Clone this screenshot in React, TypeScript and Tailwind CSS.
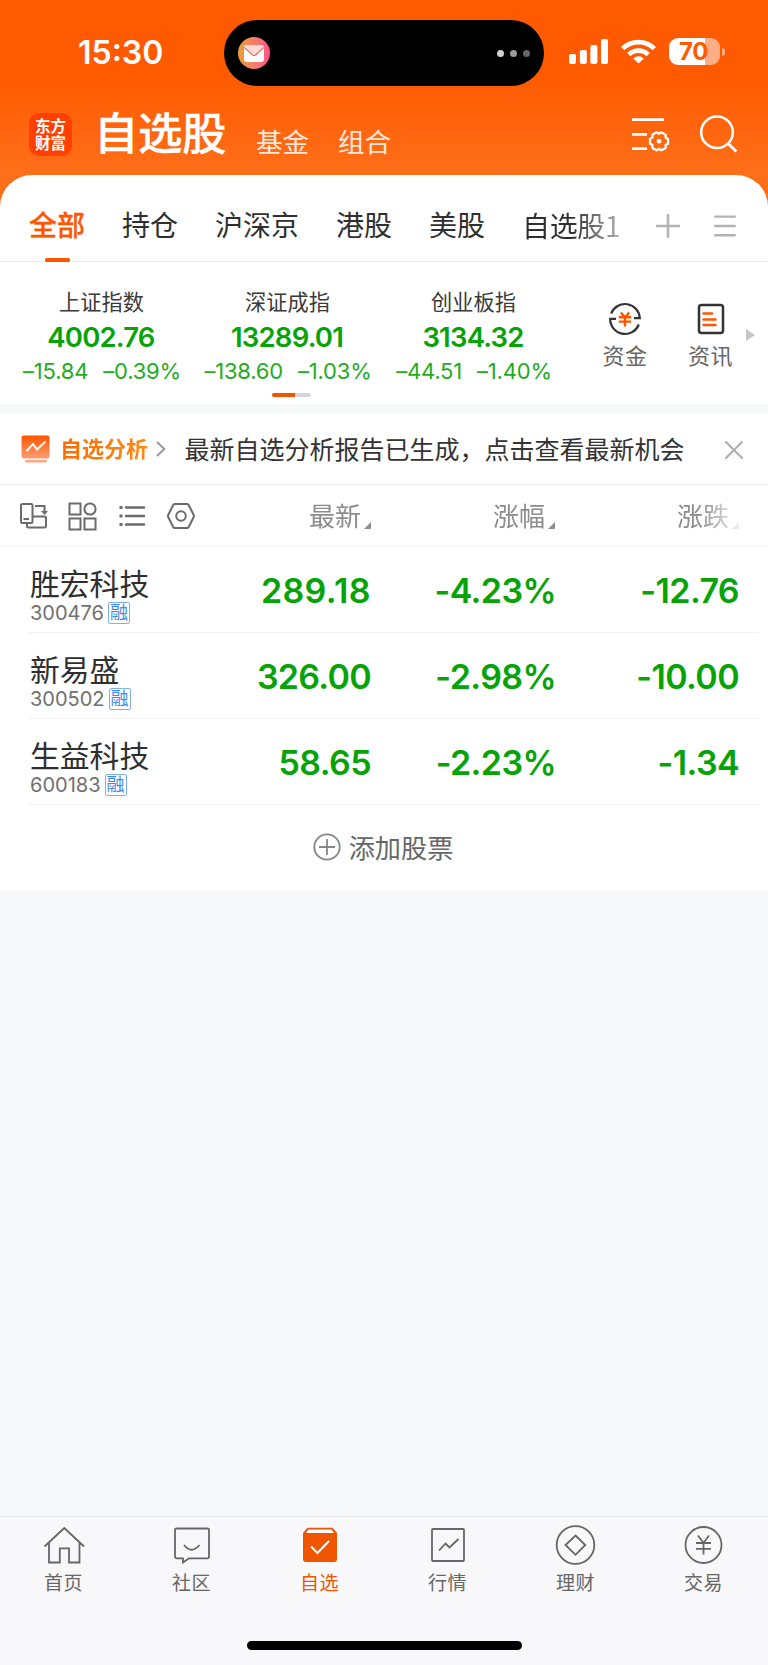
import type { ReactNode } from 'react';

const indices = [
  { name: '上证指数', value: '4002.76', change: '–15.84', percent: '–0.39%' },
  { name: '深证成指', value: '13289.01', change: '–138.60', percent: '–1.03%' },
  { name: '创业板指', value: '3134.32', change: '–44.51', percent: '–1.40%' },
];

const stocks = [
  { name: '胜宏科技', code: '300476', price: '289.18', percent: '-4.23%', change: '-12.76', priceSpacing: 'tracking-[0.4px]' },
  { name: '新易盛', code: '300502', price: '326.00', percent: '-2.98%', change: '-10.00', priceSpacing: 'tracking-[-0.7px]' },
  { name: '生益科技', code: '600183', price: '58.65', percent: '-2.23%', change: '-1.34', priceSpacing: 'tracking-[-0.6px]' },
];

const groups = ['持仓', '沪深京', '港股', '美股'];

const StatusBar = () => (
  <div className="flex h-[106px] items-center">
    <div className="w-[224px] pl-[78px] text-[32px] leading-none font-semibold">15:30</div>
    <div className="flex h-[66px] w-[320px] items-center justify-between rounded-full bg-black pr-[14px] pl-[14px]">
      <div className="flex size-8 items-center justify-center rounded-full bg-gradient-to-r from-[#e8a02c] to-[#ff4f8b]">
        <svg width="20" height="17" viewBox="0 0 20 17">
          <rect width="20" height="17" rx="3" fill="#fff" />
          <path d="M0 2.5Q0 0 3 0H17Q20 0 20 2.5L11.5 10Q10 11.2 8.5 10Z" fill="#ffd9d3" />
          <path d="M0.3 2.5L8.5 10Q10 11.2 11.5 10L19.7 2.5" fill="none" stroke="#f0705c" strokeWidth="1.1" />
        </svg>
      </div>
      <div className="flex gap-[6px]">
        <span className="size-[7px] rounded-full bg-[#d2d2d2]" />
        <span className="size-[7px] rounded-full bg-[#9b9b9b]" />
        <span className="size-[7px] rounded-full bg-[#666]" />
      </div>
    </div>
    <div className="flex items-center pb-[3px] pl-[25px]">
      <svg width="39" height="25" viewBox="0 0 39 25" fill="#fff">
        <rect x="0" y="15" width="7" height="10" rx="2" />
        <rect x="10.8" y="11" width="7" height="14" rx="2" />
        <rect x="21.4" y="6" width="7" height="19" rx="2" />
        <rect x="32" y="0" width="7" height="25" rx="2" />
      </svg>
      <svg className="ml-[13px]" width="35" height="25" viewBox="0 0 35 25" fill="none" stroke="#fff" strokeWidth="4.6">
        <path d="M1.7 9.6A22.4 22.4 0 0 1 33.3 9.6" />
        <path d="M7.8 15.6A13.8 13.8 0 0 1 27.2 15.6" />
        <path d="M17.5 24.6L12.2 19.5A7.6 7.6 0 0 1 22.8 19.5Z" fill="#fff" stroke="none" />
      </svg>
      <div className="ml-[13px] flex h-[27px] w-[51px] items-center justify-center rounded-[9px] bg-[linear-gradient(90deg,#fff_36px,#ffad85_36px)] pr-[2px] text-[24px] leading-none font-bold tracking-[-0.4px] text-[#ff5a00]">
        70
      </div>
      <div className="ml-[1.5px] h-2 w-[3px] rounded-r-full bg-[#ffad85]" />
    </div>
  </div>
);

const TitleBar = () => (
  <div className="flex h-[69px] items-start pl-[29px]">
    <div className="mt-[7px] flex size-[43px] flex-col items-center justify-center rounded-[10px] bg-[#ff4000] text-[15.5px] leading-[17px] font-bold">
      <span>东方</span>
      <span>财富</span>
    </div>
    <h1 className="ml-[22px] text-[44.5px] leading-[57px] font-medium tracking-[-0.5px] [-webkit-text-stroke:0.3px_#fff]">自选股</h1>
    <span className="mt-[18px] ml-[30px] text-[26.5px] leading-[36px] text-white/85">基金</span>
    <span className="mt-[18px] ml-[29px] text-[26.5px] leading-[36px] text-white/85">组合</span>
    <svg className="mt-[10px] ml-auto" width="38" height="36" viewBox="0 0 38 36" fill="none" stroke="#fff" strokeWidth="2.7">
      <path d="M0 3.7H32M0 18.4H15M0 32.6H15" />
      <path
        d="M36 22.9V27.7L33.6 29.1V31.9L29.4 34.3L27 32.9L24.6 34.3L20.4 31.9V29.1L18 27.7V22.9L20.4 21.5V18.7L24.6 16.3L27 17.7L29.4 16.3L33.6 18.7V21.5Z"
        strokeWidth="2.3"
        strokeLinejoin="round"
      />
      <circle cx="27" cy="25.3" r="2.3" fill="#fff" stroke="none" />
    </svg>
    <svg className="mt-[8px] mr-[30px] ml-[30px]" width="38" height="40" viewBox="0 0 38 40" fill="none" stroke="#fff" strokeWidth="2.5">
      <circle cx="17" cy="18.3" r="15.8" />
      <path d="M28 29.5L36.3 37.5" strokeWidth="3" />
    </svg>
  </div>
);

const GroupTabs = () => (
  <div className="flex h-[87px] border-b border-[#ececec] pl-[29px] text-[28px] leading-[41px] text-[#2f2f2f]">
    <div className="flex flex-col items-center text-[#ff5500]">
      <span className="mt-[31px] font-medium [-webkit-text-stroke:0.3px_#ff5500]">全部</span>
      <span className="mt-[11px] h-[4px] w-[25px] shrink-0 rounded-[1.5px] bg-[#ff5500]" />
    </div>
    {groups.map((g) => (
      <span key={g} className="mt-[31px] ml-[37px]">
        {g}
      </span>
    ))}
    <span className="mt-[30px] ml-[37px] bg-gradient-to-r from-[#2f2f2f] from-50% to-[#b4b4b4] bg-clip-text font-['Noto_Sans_CJK_SC'] tracking-[-0.4px] text-transparent">
      自选股1
    </span>
    <svg className="mt-[39px] ml-auto" width="24" height="24" viewBox="0 0 24 24" stroke="#b3b3b3" strokeWidth="2.6">
      <path d="M12 1V23M1 12H23" strokeLinecap="round" />
    </svg>
    <svg className="mt-[39px] mr-[32px] ml-[34px]" width="22" height="24" viewBox="0 0 22 24" stroke="#b3b3b3" strokeWidth="2.4">
      <path d="M1.2 2.6H20.8M1.2 12H20.8M1.2 21.2H20.8" strokeLinecap="round" />
    </svg>
  </div>
);

const MarketIndices = () => (
  <div className="flex h-[142px] pl-[8px]">
    <div className="flex shrink-0 flex-col items-center">
      <div className="grid w-[558px] grid-cols-3">
        {indices.map((item) => (
          <div key={item.name} className="flex flex-col items-center whitespace-nowrap">
            <span className="mt-[25px] pl-[1px] text-[21.2px] leading-[31px] text-[#3a3a3a]">{item.name}</span>
            <span className="mt-[2px] text-[27.5px] leading-[34px] font-semibold tracking-[-0.8px] text-[#05a305]">{item.value}</span>
            <span className="mt-[3px] flex gap-[15px] pl-[2px] text-[22px] leading-[28px] tracking-[-0.2px] text-[#1eac1e]">
              <span>{item.change}</span>
              <span>{item.percent}</span>
            </span>
          </div>
        ))}
      </div>
      <div className="mt-[8px] ml-[8px] flex h-[4px] w-[39px] overflow-hidden rounded-full bg-[#d2d5dd]">
        <span className="w-[23px] bg-[#f05500]" />
      </div>
    </div>
    <div className="ml-[17px] flex w-[84px] shrink-0 flex-col items-center text-[22px] text-[#666]">
      <svg className="mt-[40px]" width="34" height="34" viewBox="0 0 34 34" fill="none" stroke="#333" strokeWidth="2.2">
        <path d="M3.2 11.5A14.8 14.8 0 0 1 31.8 16.2H26" />
        <path d="M30.8 22.5A14.8 14.8 0 0 1 2.2 16.8H8" />
        <path d="M12.8 10.5L17 15.2L21.2 10.5M10.8 15.2H23.2M10.8 19.6H23.2M17 15V24.4" stroke="#ff5500" strokeWidth="2.4" />
      </svg>
      <span className="mt-[4px] leading-[32px] tracking-[0.6px]">资金</span>
    </div>
    <div className="flex w-[87px] shrink-0 flex-col items-center text-[22px] text-[#666]">
      <svg className="mt-[40px]" width="28" height="34" viewBox="0 0 28 34" fill="none">
        <rect x="2" y="3" width="24" height="28" rx="2.5" stroke="#333" strokeWidth="2.5" />
        <path d="M6.5 11.5H15M6.5 17.5H18.5M6.5 23H18.5" stroke="#ff5500" strokeWidth="2.5" strokeLinecap="round" />
      </svg>
      <span className="mt-[4px] leading-[32px] tracking-[0.6px]">资讯</span>
    </div>
    <svg className="mt-[67px] ml-[-8px] shrink-0" width="9" height="12" viewBox="0 0 9 12">
      <path d="M0 0L9 6L0 12Z" fill="#c6c6c6" />
    </svg>
  </div>
);

const AnalysisNotice = () => (
  <div className="flex h-[72px] items-center border-b border-[#ececec] pl-[21px]">
    <svg width="29" height="28" viewBox="0 0 29 28" fill="none">
      <defs>
        <linearGradient id="screen" x1="0" y1="0" x2="0" y2="1">
          <stop offset="0" stopColor="#ff5500" />
          <stop offset="1" stopColor="#ff9e74" />
        </linearGradient>
      </defs>
      <rect x="0.5" y="0.5" width="28" height="23" rx="2" fill="url(#screen)" />
      <path d="M6 15.5L12 9L16 14.5L24 7" stroke="#fff" strokeWidth="1.9" strokeLinecap="round" />
      <rect x="4" y="25" width="22" height="2.6" rx="1.3" fill="#ffa783" />
    </svg>
    <span className="mt-[1px] ml-[10px] bg-gradient-to-r from-[#ff6a00] to-[#ff8a14] bg-clip-text text-[22px] leading-[32px] font-bold text-transparent">
      自选分析
    </span>
    <svg className="ml-[8px]" width="10" height="16" viewBox="0 0 10 16" fill="none" stroke="#999" strokeWidth="2">
      <path d="M1 1L8.3 8L1 15" />
    </svg>
    <span className="mt-[3px] ml-[18.5px] text-[25px] leading-[36px] whitespace-nowrap text-[#333]">最新自选分析报告已生成，点击查看最新机会</span>
    <svg className="mt-[2px] mr-[25px] ml-auto" width="18" height="18" viewBox="0 0 18 18" stroke="#b0b0b0" strokeWidth="2.2">
      <path d="M1 1L17 17M17 1L1 17" strokeLinecap="round" />
    </svg>
  </div>
);

const SortLabel = ({ children }: { children: ReactNode }) => (
  <span className="flex w-[184px] items-end justify-end gap-[3px] text-[26px] leading-[38px] text-[#8c8c8c]">
    {children}
    <svg className="mb-[7px]" width="7" height="7" viewBox="0 0 7 7">
      <path d="M7 0V7H0Z" fill="#8c8c92" />
    </svg>
  </span>
);

const TableHead = () => (
  <div className="flex h-[62px] items-center border-b-2 border-[#f6f6f8] pt-[2px] pl-[18px]">
    <svg className="shrink-0" width="178" height="30" viewBox="0 0 178 30" fill="none" stroke="#6b6b6b" strokeWidth="2">
      {/* rotate screen */}
      <rect x="3" y="3" width="11.5" height="19" rx="1.5" />
      <path d="M5.500 18H11" />
      <path d="M17 5H26.5V11" />
      <path d="M23 10H30L26.5 14Z" fill="#6b6b6b" stroke="none" />
      <path d="M14.5 15.5H26.5Q28 15.500 28 17V25Q28 26.500 26.500 26.500H10.500Q9 26.500 9 25V22.500" />
      {/* grid view */}
      <rect x="51.500" y="2.500" width="11" height="11" />
      <circle cx="72" cy="8" r="5.600" />
      <rect x="51.500" y="17.500" width="11" height="11" />
      <rect x="66.500" y="17.500" width="11" height="11" />
      {/* list view */}
      <path d="M108 6.500H126M108 15H126M108 23.500H126" strokeWidth="2.500" strokeLinecap="round" />
      <path d="M101.500 6.500H104.500M101.500 15H104.500M101.500 23.500H104.500" strokeWidth="3" />
      {/* settings */}
      <path d="M156.700 3H169.200Q170.200 3 170.700 4L175.700 14Q176.200 15 175.700 16L170.700 26Q170.200 27 169.200 27H156.700Q155.700 27 155.200 26L150.200 16Q149.700 15 150.200 14L155.200 4Q155.700 3 156.700 3Z" />
      <circle cx="163" cy="15" r="4.800" />
    </svg>
    <div className="ml-[-9px] flex flex-1 justify-end pt-[2px] pr-[29px] [mask-image:linear-gradient(90deg,#000_512px,transparent_558px)]">
      <SortLabel>最新</SortLabel>
      <SortLabel>涨幅</SortLabel>
      <SortLabel>涨跌</SortLabel>
    </div>
  </div>
);

const StockList = () => (
  <div className="pl-[29px]">
    {stocks.map((s) => (
      <div
        key={s.code}
        className="mr-[9px] flex h-[86px] items-center border-b border-[#f2f2f3] text-[34px] font-semibold tracking-[-0.6px] text-[#05a305]"
      >
        <div className="w-[159px] pl-[1px] font-normal">
          <div className="mt-[11px] text-[29.8px] leading-[36px] tracking-normal text-[#2f2f2f]">{s.name}</div>
          <div className="flex h-[22px] items-center text-[20px] leading-none tracking-normal text-[#707070]">
            <span>{s.code}</span>
            <span className="ml-[4px] flex size-[22px] items-center justify-center rounded-[2px] border border-[#7fb0ee] text-[18px] leading-none text-[#3f8ae6]">
              融
            </span>
          </div>
        </div>
        <span className={`w-[183px] pt-[1px] text-right ${s.priceSpacing}`}>{s.price}</span>
        <span className="w-[185px] pt-[1px] text-right">{s.percent}</span>
        <span className="w-[183px] pt-[1px] text-right">{s.change}</span>
      </div>
    ))}
  </div>
);

const AddStock = () => (
  <div className="flex h-[86px] items-center justify-center gap-[8px] pr-[2px] pb-[2px] text-[26.2px] text-[#666]">
    <svg width="28" height="28" viewBox="0 0 28 28" fill="none" stroke="#85858c" strokeWidth="1.8">
      <circle cx="14" cy="14" r="12.7" />
      <path d="M14 6V22M6 14H22" />
    </svg>
    <span className="pt-[4px]">添加股票</span>
  </div>
);

const NavItem = ({ label, active, children }: { label: string; active?: boolean; children: ReactNode }) => (
  <div className={active ? 'flex flex-col items-center text-[#f05500]' : 'flex flex-col items-center text-[#666]'}>
    <svg className="mt-[8px]" width="42" height="40" viewBox="0 0 42 40" fill="none" stroke="currentColor" strokeWidth="1.8">
      {children}
    </svg>
    <span className="mt-[5px] pr-[1px] text-[19px] leading-[28px] tracking-[0.4px]">{label}</span>
  </div>
);

const BottomNav = () => (
  <div className="flex h-[149px] flex-col items-center justify-between border-t border-[#e8e9eb] bg-[#f8f8fb]">
    <div className="grid w-full grid-cols-6">
      <NavItem label="首页">
        <path d="M1.500 21.500L21.300 3L41 21.500M6 18V37.500H16.800V23.300H26V37.500H36.500V18" />
      </NavItem>
      <NavItem label="社区">
        <path d="M5.500 3.500H36.500Q38 3.500 38 5V31.500Q38 33.300 36.500 33.300H18L12 37.500V33.300H6Q4 33.300 4 31.500V5Q4 3.500 5.500 3.500Z" />
        <path d="M13 20Q20.500 29.500 28.500 20" />
      </NavItem>
      <NavItem label="自选" active>
        <path d="M4 8L8.500 2.700H33.500L38 8V34Q38 37 35 37H7Q4 37 4 34Z" fill="currentColor" stroke="none" />
        <path d="M9.500 4.500H32.500L35 8H7Z" fill="#fff" stroke="none" />
        <path d="M12 21.500L18.500 28L30 16" stroke="#fff" strokeWidth="2" />
      </NavItem>
      <NavItem label="行情">
        <rect x="5" y="4" width="32" height="32" rx="1" />
        <path d="M12 25.500L18.500 18.500L22.500 22.500L31.500 14" />
      </NavItem>
      <NavItem label="理财">
        <circle cx="20.500" cy="20" r="18.800" />
        <path d="M20.500 10.500L30.300 20L20.500 29.800L10.500 20Z" />
      </NavItem>
      <NavItem label="交易">
        <circle cx="20.500" cy="20" r="18" />
        <path d="M15 10.500L20.500 18L26 10.500M13 18H28M13 23.800H28M20.500 18V29.500" />
      </NavItem>
    </div>
    <div className="mb-[15px] h-[9px] w-[275px] rounded-full bg-black" />
  </div>
);

const App = () => {
  return (
    <div className="flex h-[1665px] w-[768px] flex-col overflow-hidden bg-[#f7f8fa] font-['Inter','Noto_Sans_CJK_SC',sans-serif]">
      <div className="bg-[linear-gradient(180deg,#ff5a00_0px,#ff5a00_75px,#ff6f1a_175px)]">
        <div className="text-white">
          <StatusBar />
          <TitleBar />
        </div>
        <div className="rounded-t-[32px] bg-white">
          <GroupTabs />
          <MarketIndices />
        </div>
      </div>
      <div className="mt-[9px] bg-white">
        <AnalysisNotice />
        <TableHead />
        <StockList />
        <AddStock />
      </div>
      <div className="flex-1" />
      <BottomNav />
    </div>
  );
};

export default App;
